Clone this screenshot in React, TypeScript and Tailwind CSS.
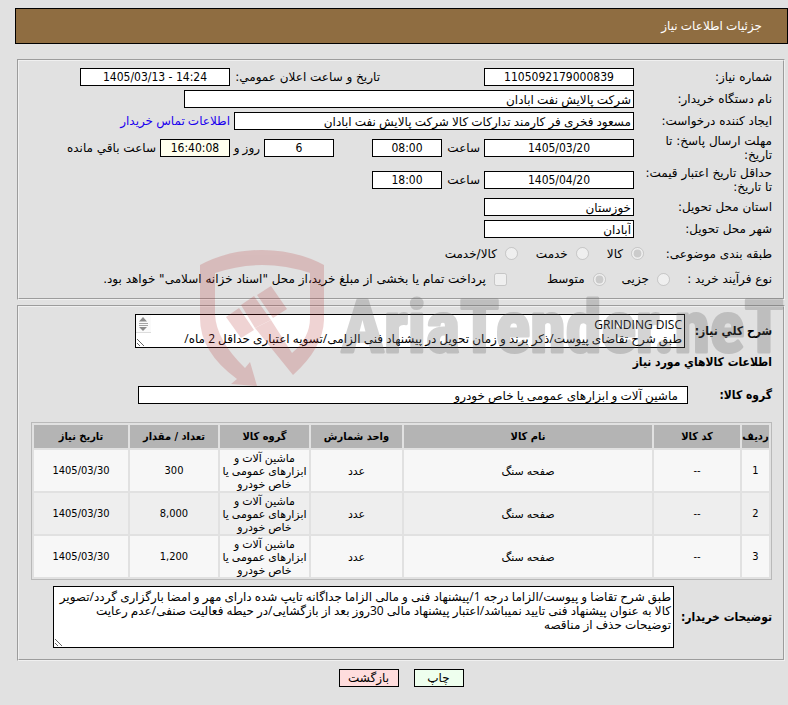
import type { ReactNode } from "react";

const items = [
  { id: 1, code: "--", name: "صفحه سنگ", unit: "عدد", group: "ماشین آلات و ابزارهای عمومی یا خاص خودرو", count: "300", date: "1405/03/30" },
  { id: 2, code: "--", name: "صفحه سنگ", unit: "عدد", group: "ماشین آلات و ابزارهای عمومی یا خاص خودرو", count: "8,000", date: "1405/03/30" },
  { id: 3, code: "--", name: "صفحه سنگ", unit: "عدد", group: "ماشین آلات و ابزارهای عمومی یا خاص خودرو", count: "1,200", date: "1405/03/30" },
];

const columns = [
  { title: "ردیف", width: "w-[27px]" },
  { title: "کد کالا", width: "w-[86px]" },
  { title: "نام کالا", width: "w-auto" },
  { title: "واحد شمارش", width: "w-[91px]" },
  { title: "گروه کالا", width: "w-[89px]" },
  { title: "تعداد / مقدار", width: "w-[88px]" },
  { title: "تاریخ نیاز", width: "w-[94px]" },
];

const narrow = "font-['DejaVu_Sans_Condensed','DejaVu_Sans',sans-serif]";
const body = "font-['Open_Sans','DejaVu_Sans',sans-serif]";
const field = `${body} h-[18px] border border-black bg-white px-[2px]`;
const number = `${narrow} h-[18px] border border-black text-center`;
const area = `${body} block border border-black bg-white px-[2px] pt-[3px] leading-[14px] resize overflow-hidden`;
const panel = "border-2 border-[#f0f0f0] [border-style:groove] pr-[11px] pl-3";

const Row = ({ id, label, children }: { id: string; label: string; children: ReactNode }) => (
  <div className="flex min-h-[22px] items-center">
    <label htmlFor={id} className="w-[138px] shrink-0 pl-1">
      {label}
    </label>
    <div className="flex min-w-0 grow items-center gap-1">{children}</div>
  </div>
);

const Watermark = () => (
  <svg
    className="pointer-events-none absolute left-[198px] top-[248px] h-[145px] w-[590px]"
    viewBox="0 0 590 145"
    direction="ltr"
  >
    <g fill="#b42828" opacity="0.2">
      <path d="M2 17Q30 2 64 2Q98 2 126 17V72Q125 100 95 127L57 80L73 72L94 105Q112 90 112 70V25Q64 9 17 25V66Q18 92 47 120L52 114L59 138L33 136L39 131Q2 104 2 70Z" />
      <path d="M28 69L41 60L56 82L43 90Z" />
      <path d="M43 57L56 48L73 72L57 80Z" />
      <path d="M59 47L73 38L89 61L75 70Z" />
    </g>
    <text
      x="143"
      y="104"
      fill="#646464"
      stroke="#646464"
      strokeWidth="3"
      strokeLinejoin="round"
      opacity="0.27"
      className="text-[72px] font-bold font-['Roboto_Condensed',Roboto,sans-serif]"
    >
      AriaTender.neT
    </text>
  </svg>
);

const App = () => {
  return (
    <div
      dir="rtl"
      className="relative min-h-screen bg-[#e1e1e1] pt-2 text-[12px] leading-[14px] text-black font-['DejaVu_Sans',sans-serif]"
    >
      {/* Title bar */}
      <header className={`${body} ml-[15px] flex h-9 items-center border border-black bg-[#8f6d41] px-[25px] text-white`}>
        <h1>جزئیات اطلاعات نیاز</h1>
      </header>

      <form className="mr-[3px] ml-[17px] mt-[15px]">
        {/* Request details */}
        <fieldset className={`${panel} pt-[5px] pb-[7px]`}>
          <Row id="number" label="شماره نیاز:">
            <input id="number" readOnly className={`${number} w-[150px] bg-white`} defaultValue="1105092179000839" />
            <label htmlFor="announced" className="mr-[100px] w-[146px]">
              تاریخ و ساعت اعلان عمومي:
            </label>
            <input id="announced" readOnly dir="ltr" className={`${number} w-[150px] bg-white`} defaultValue="1405/03/13 - 14:24" />
          </Row>
          <Row id="org" label="نام دستگاه خریدار:">
            <input id="org" readOnly className={`${field} w-[450px]`} defaultValue="شرکت پالایش نفت ابادان" />
          </Row>
          <Row id="creator" label="ایجاد کننده درخواست:">
            <input
              id="creator"
              readOnly
              className={`${field} w-[400px]`}
              defaultValue="مسعود فخری فر کارمند تدارکات کالا شرکت پالایش نفت ابادان"
            />
            <a href="#contact" className={`${body} text-[#1a00ee]`}>اطلاعات تماس خریدار</a>
          </Row>
          <div className="py-[2px]">
            <Row id="deadline" label="مهلت ارسال پاسخ: تا تاریخ:">
              <input id="deadline" readOnly dir="ltr" className={`${number} w-[150px] bg-white`} defaultValue="1405/03/20" />
              <label htmlFor="deadline-time" className="w-[34px]">ساعت</label>
              <input id="deadline-time" readOnly dir="ltr" className={`${number} w-[70px] bg-white`} defaultValue="08:00" />
              <input aria-label="روز" readOnly className={`${number} mr-[34px] w-[70px] bg-white`} defaultValue="6" />
              <span className={`${body} w-[26px] whitespace-nowrap`}>روز و</span>
              <input aria-label="ساعت باقی مانده" readOnly dir="ltr" className={`${number} w-[70px] bg-[#ffffee]`} defaultValue="16:40:08" />
              <span>ساعت باقي مانده</span>
            </Row>
          </div>
          <div className="py-[2px]">
            <Row id="validity" label="حداقل تاریخ اعتبار قیمت: تا تاریخ:">
              <input id="validity" readOnly dir="ltr" className={`${number} w-[150px] bg-white`} defaultValue="1405/04/20" />
              <label htmlFor="validity-time" className="w-[34px]">ساعت</label>
              <input id="validity-time" readOnly dir="ltr" className={`${number} w-[70px] bg-white`} defaultValue="18:00" />
            </Row>
          </div>
          <Row id="province" label="استان محل تحویل:">
            <input id="province" readOnly className={`${field} w-[150px]`} defaultValue="خوزستان" />
          </Row>
          <Row id="city" label="شهر محل تحویل:">
            <input id="city" readOnly className={`${field} w-[150px]`} defaultValue="آبادان" />
          </Row>
          <div className="flex h-[27px] items-center gap-[18px]">
            <span className="w-[110px]">طبقه بندی موضوعی:</span>
            <label className="flex items-center gap-2">
              <input type="radio" name="category" disabled defaultChecked />
              کالا
            </label>
            <label className="flex items-center gap-2">
              <input type="radio" name="category" disabled />
              خدمت
            </label>
            <label className="flex items-center gap-2">
              <input type="radio" name="category" disabled />
              کالا/خدمت
            </label>
          </div>
          <div className="flex h-6 items-center gap-4">
            <span className="w-[86px]">نوع فرآیند خرید :</span>
            <label className="flex items-center gap-2">
              <input type="radio" name="process" disabled />
              جزیی
            </label>
            <label className="flex items-center gap-2">
              <input type="radio" name="process" disabled defaultChecked />
              متوسط
            </label>
            <label className="mr-6 flex items-center gap-2">
              <input type="checkbox" disabled />
              پرداخت تمام یا بخشی از مبلغ خرید،از محل "اسناد خزانه اسلامی" خواهد بود.
            </label>
          </div>
        </fieldset>

        {/* Goods */}
        <fieldset className={`${panel} mt-[5px] pt-[7px] pb-[11px]`}>
          <div className="flex items-center">
            <label htmlFor="summary" className={`${narrow} w-[87px] font-bold`}>
              شرح کلي نیاز:
            </label>
            <div className="relative">
              <textarea
                id="summary"
                readOnly
                className={`${area} h-[34px] w-[550px]`}
                defaultValue={"GRINDING DISC\nطبق شرح تقاضای پیوست/ذکر برند و زمان تحویل در پیشنهاد فنی الزامی/تسویه اعتباری حداقل 2 ماه/"}
              />
              <svg className="absolute left-px top-px h-[18px] w-[15px]" viewBox="0 0 15 18">
                <path d="M0 0H15V18H0Z" fill="#fafafa" />
                <path d="M3 6.500L7 2L11 6.500ZM3 12L7 16L11 12Z" fill="#8b8b8b" />
                <path d="M3 8.500H12M3 10.500H12" stroke="#a5a5a5" />
                <path d="M0 17.500H15" stroke="#dcdcdc" />
              </svg>
            </div>
          </div>
          <h2 className={`${narrow} mt-[7px] font-bold`}>اطلاعات کالاهاي مورد نیاز</h2>
          <div className="mt-[17px] flex items-center">
            <label htmlFor="group" className={`${narrow} w-[84px] font-bold`}>
              گروه کالا:
            </label>
            <input
              id="group"
              readOnly
              className={`${body} h-[18px] w-[550px] border border-black bg-white px-[9px]`}
              defaultValue="ماشین آلات و ابزارهای عمومی یا خاص خودرو"
            />
          </div>

          <table className="mt-[18px] w-full table-fixed border-separate border-spacing-[2px] border border-[#b9b9b9] text-center text-[11px] leading-[13px]">
            <thead>
              <tr className="h-[23px] bg-[#b4b4b4]">
                {columns.map((column) => (
                  <th key={column.title} className={`${column.width} ${narrow} whitespace-nowrap`}>
                    {column.title}
                  </th>
                ))}
              </tr>
            </thead>
            <tbody className={narrow}>
              {items.map((item) => (
                <tr key={item.id} className="h-[41px] odd:bg-[#f7f7f7] even:bg-[#eeeeee]">
                  <td>{item.id}</td>
                  <td>{item.code}</td>
                  <td className={body}>{item.name}</td>
                  <td className={body}>{item.unit}</td>
                  <td className={`${body} py-px`}>{item.group}</td>
                  <td>{item.count}</td>
                  <td>{item.date}</td>
                </tr>
              ))}
            </tbody>
          </table>

          <div className="mt-[6px] flex items-center">
            <label htmlFor="notes" className={`${narrow} w-[98px] whitespace-nowrap font-bold`}>
              توضیحات خریدار:
            </label>
            <textarea
              id="notes"
              readOnly
              className={`${area} h-[62px] w-[621px]`}
              defaultValue="طبق شرح تقاضا و پیوست/الزاما درجه 1/پیشنهاد فنی و مالی الزاما جداگانه تایپ شده دارای مهر و امضا بارگزاری گردد/تصویر کالا به عنوان پیشنهاد فنی تایید نمیباشد/اعتبار پیشنهاد مالی 30روز بعد از بازگشایی/در حیطه فعالیت صنفی/عدم رعایت توضیحات حذف از مناقصه"
            />
          </div>
        </fieldset>

        {/* Actions */}
        <div className="mt-2 flex justify-center gap-[15px] pb-4">
          <button type="button" className="h-[18px] w-[50px] border border-black bg-[#eeffee]">
            چاپ
          </button>
          <button type="button" className="h-[18px] w-[60px] border border-black bg-[#ffdddd]">
            بازگشت
          </button>
        </div>
      </form>

      <Watermark />
    </div>
  );
};

export default App;
